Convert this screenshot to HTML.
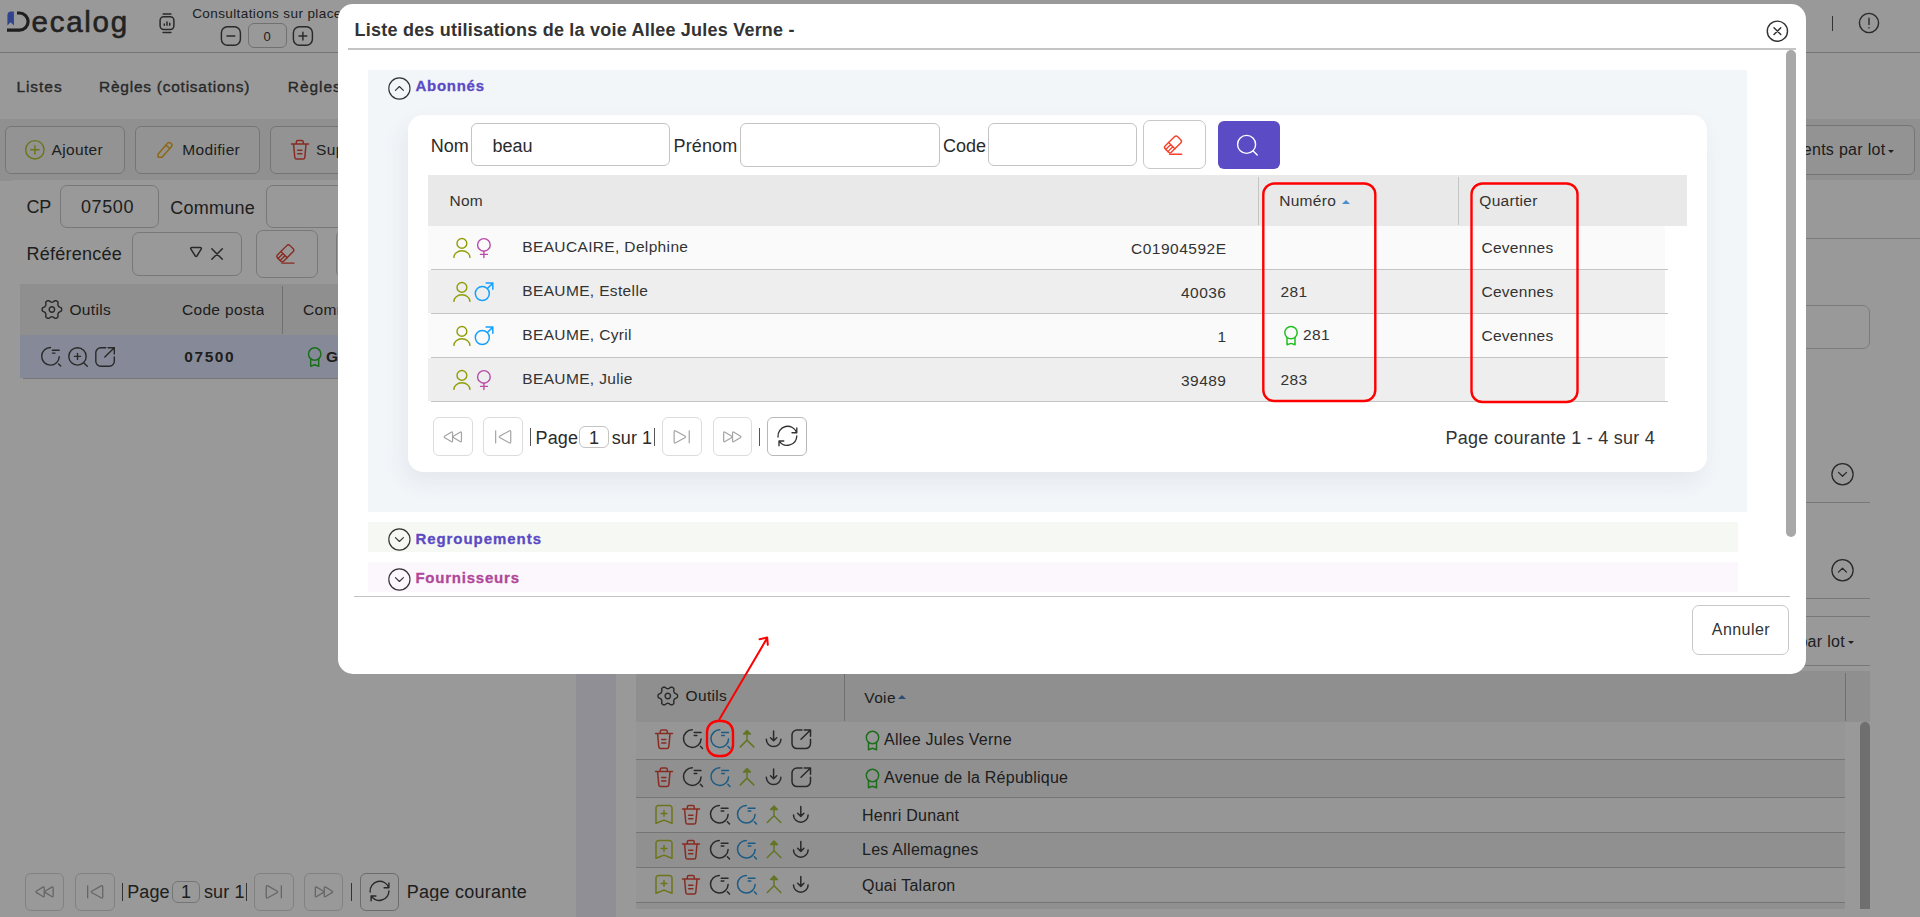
<!DOCTYPE html><html><head><meta charset="utf-8"><style>
html,body{margin:0;padding:0}
body{width:1920px;height:917px;overflow:hidden;position:relative;background:#fff;font-family:"Liberation Sans",sans-serif}
.t{position:absolute;line-height:1;white-space:nowrap}
.r{position:absolute}
.lay{position:absolute;left:0;top:0;overflow:visible}
#bg,#modal{position:absolute;left:0;top:0;width:1920px;height:917px;overflow:hidden}
#ov{position:absolute;left:0;top:0;width:1920px;height:917px;background:rgba(0,0,0,.4)}
</style></head><body>
<div id="bg"><div class="r" style="left:0px;top:0px;width:1920px;height:52px;background:#fff;"></div>
<div class="r" style="left:0px;top:52px;width:1920px;height:1px;background:#c4c4c4;"></div>
<div class="t" style="left:31.5px;top:6.63px;font-size:29.5px;color:#3a3a3a;letter-spacing:1.75px;-webkit-text-stroke:0.6px #3a3a3a;">ecalog</div>
<div class="t" style="left:192.2px;top:7.22px;font-size:13.5px;color:#333;letter-spacing:0.4px;">Consultations sur place</div>
<div class="r" style="left:247.5px;top:23.3px;width:39.0px;height:25.2px;background:#fff;border:1px solid #bdbdbd;border-radius:6px;box-sizing:border-box;"></div>
<div class="t" style="left:263.5px;top:29.70px;font-size:13px;color:#333;">0</div>
<div class="r" style="left:1832.3px;top:16px;width:1.0px;height:15px;background:#555;"></div>
<div class="t" style="left:16.4px;top:79.08px;font-size:15.5px;color:#444;letter-spacing:0.95px;-webkit-text-stroke:0.35px #444;">Listes</div>
<div class="t" style="left:99px;top:79.08px;font-size:15.5px;color:#444;letter-spacing:0.75px;-webkit-text-stroke:0.35px #444;">Règles (cotisations)</div>
<div class="t" style="left:287.8px;top:79.08px;font-size:15.5px;color:#444;letter-spacing:0.95px;-webkit-text-stroke:0.35px #444;">Règles</div>
<div class="r" style="left:0px;top:119px;width:1920px;height:62px;background:#f0f0f0;"></div>
<div class="r" style="left:5px;top:126px;width:120px;height:48px;background:#f6f6f6;border:1px solid #c4c4c4;border-radius:6px;box-sizing:border-box;"></div>
<div class="t" style="left:51.5px;top:141.88px;font-size:15.5px;color:#333;letter-spacing:0.35px;">Ajouter</div>
<div class="r" style="left:135px;top:126px;width:125px;height:48px;background:#f6f6f6;border:1px solid #c4c4c4;border-radius:6px;box-sizing:border-box;"></div>
<div class="t" style="left:182.2px;top:141.88px;font-size:15.5px;color:#333;letter-spacing:0.35px;">Modifier</div>
<div class="r" style="left:270px;top:126px;width:150px;height:48px;background:#f6f6f6;border:1px solid #c4c4c4;border-radius:6px;box-sizing:border-box;"></div>
<div class="t" style="left:316px;top:141.88px;font-size:15.5px;color:#333;letter-spacing:0.35px;">Supprimer</div>
<div class="r" style="left:1680px;top:125px;width:235px;height:50px;background:#f6f6f6;border:1px solid #c4c4c4;border-radius:6px;box-sizing:border-box;"></div>
<div class="t" style="right:34.5px;top:141.86px;font-size:16px;color:#333;letter-spacing:0.3px;">Traitements par lot</div>
<div class="r" style="left:1887.5px;top:149.5px;width:0;height:0;border-left:3.5px solid transparent;border-right:3.5px solid transparent;border-top:3.5px solid #333;"></div><div class="r" style="left:0px;top:180px;width:576px;height:737px;background:#fff;border-top-left-radius:16px;"></div>
<div class="t" style="left:26.5px;top:198.36px;font-size:18px;color:#333;letter-spacing:-0.3px;">CP</div>
<div class="r" style="left:60.3px;top:185px;width:99.10000000000001px;height:43.30000000000001px;background:#fff;border:1px solid #c8c8c8;border-radius:7px;box-sizing:border-box;"></div>
<div class="t" style="left:81px;top:197.96px;font-size:18px;color:#333;letter-spacing:0.6px;">07500</div>
<div class="t" style="left:170.2px;top:198.96px;font-size:18px;color:#333;letter-spacing:0.25px;">Commune</div>
<div class="r" style="left:266.4px;top:185px;width:293.6px;height:43.30000000000001px;background:#fff;border:1px solid #c8c8c8;border-radius:7px;box-sizing:border-box;"></div>
<div class="t" style="left:26.5px;top:245.26px;font-size:18px;color:#333;letter-spacing:0.25px;">Référencée</div>
<div class="r" style="left:132.3px;top:232.4px;width:109.39999999999998px;height:43.29999999999998px;background:#fff;border:1px solid #c8c8c8;border-radius:7px;box-sizing:border-box;"></div>
<div class="r" style="left:255.5px;top:229.6px;width:62.80000000000001px;height:48.900000000000006px;background:#fff;border:1px solid #c8c8c8;border-radius:7px;box-sizing:border-box;"></div>
<div class="r" style="left:336px;top:229.6px;width:64px;height:48.900000000000006px;background:#fff;border:1px solid #c8c8c8;border-radius:7px;box-sizing:border-box;"></div>
<div class="r" style="left:20px;top:284px;width:556px;height:51px;background:#eeeeee;"></div>
<div class="r" style="left:282px;top:286px;width:1px;height:48px;background:#bbb;"></div>
<div class="t" style="left:69.4px;top:302.08px;font-size:15.5px;color:#333;letter-spacing:0.35px;">Outils</div>
<div class="t" style="left:181.9px;top:302.08px;font-size:15.5px;color:#333;letter-spacing:0.35px;width:82px;overflow:hidden;">Code postal</div>
<div class="t" style="left:303px;top:302.08px;font-size:15.5px;color:#333;letter-spacing:0.35px;">Commune</div>
<div class="r" style="left:20px;top:335px;width:556px;height:43px;background:#dfe6fd;"></div>
<div class="r" style="left:23px;top:378px;width:553px;height:1px;background:#c8c8c8;"></div>
<div class="t" style="left:184.2px;top:348.58px;font-size:15.5px;color:#333;font-weight:bold;letter-spacing:1.6px;">07500</div>
<div class="t" style="left:326px;top:348.58px;font-size:15.5px;color:#333;font-weight:bold;">Grenoble</div>
<div class="r" style="left:25px;top:872.7px;width:39.3px;height:38.299999999999955px;background:#fff;border:1px solid #d8d8d8;border-radius:6px;box-sizing:border-box;"></div>
<div class="r" style="left:75.3px;top:872.7px;width:39.3px;height:38.299999999999955px;background:#fff;border:1px solid #d8d8d8;border-radius:6px;box-sizing:border-box;"></div>
<div class="r" style="left:254.4px;top:872.7px;width:39.29999999999998px;height:38.299999999999955px;background:#fff;border:1px solid #d8d8d8;border-radius:6px;box-sizing:border-box;"></div>
<div class="r" style="left:304.2px;top:872.7px;width:39.30000000000001px;height:38.299999999999955px;background:#fff;border:1px solid #d8d8d8;border-radius:6px;box-sizing:border-box;"></div>
<div class="r" style="left:359.6px;top:872.7px;width:39.0px;height:38.299999999999955px;background:#fff;border:1px solid #b4b4b4;border-radius:6px;box-sizing:border-box;"></div>
<div class="r" style="left:122px;top:883px;width:1px;height:18px;background:#555;"></div>
<div class="t" style="left:127.2px;top:883.26px;font-size:18px;color:#333;letter-spacing:0.1px;">Page</div>
<div class="r" style="left:171.5px;top:880.6px;width:28.900000000000006px;height:22.399999999999977px;background:#fff;border:1px solid #c4c4c4;border-radius:6px;box-sizing:border-box;"></div>
<div class="t" style="left:181px;top:883.26px;font-size:18px;color:#333;">1</div>
<div class="t" style="left:204px;top:883.26px;font-size:18px;color:#333;letter-spacing:0.1px;">sur 1</div>
<div class="r" style="left:246.3px;top:883px;width:1.0px;height:18px;background:#555;"></div>
<div class="r" style="left:351px;top:883px;width:1px;height:18px;background:#555;"></div>
<div class="t" style="left:406.7px;top:883.26px;font-size:18px;color:#333;letter-spacing:0.25px;width:120px;overflow:hidden;">Page courante 1 - 1 sur 1</div>
<div class="r" style="left:576px;top:180px;width:40px;height:737px;background:#efeff9;"></div>
<div class="r" style="left:616px;top:180px;width:1304px;height:737px;background:#fff;"></div>
<div class="r" style="left:616px;top:238px;width:1304px;height:1px;background:#cfcfcf;"></div>
<div class="r" style="left:1500px;top:305px;width:369.5999999999999px;height:43.60000000000002px;background:#fff;border:1px solid #cfcfcf;border-radius:7px;box-sizing:border-box;"></div>
<div class="r" style="left:616px;top:502px;width:1254px;height:1px;background:#c8c8c8;"></div>
<div class="r" style="left:616px;top:598px;width:1254px;height:1px;background:#c8c8c8;"></div>
<div class="r" style="left:616px;top:616px;width:1254px;height:1px;background:#c8c8c8;"></div>
<div class="t" style="right:75px;top:633.76px;font-size:16px;color:#333;letter-spacing:0.3px;">Traitements par lot</div>
<div class="r" style="left:1848px;top:641px;width:0;height:0;border-left:3.5px solid transparent;border-right:3.5px solid transparent;border-top:3.5px solid #333;"></div><div class="r" style="left:616px;top:665px;width:1254px;height:1px;background:#c8c8c8;"></div>
<div class="r" style="left:636px;top:671px;width:1234px;height:51px;background:#eeeeee;"></div>
<div class="r" style="left:843.5px;top:673px;width:1.0px;height:48px;background:#bbb;"></div>
<div class="r" style="left:1845px;top:673px;width:1px;height:48px;background:#bbb;"></div>
<div class="t" style="left:685.5px;top:688.38px;font-size:15.5px;color:#333;letter-spacing:0.35px;">Outils</div>
<div class="t" style="left:864.3px;top:689.58px;font-size:15.5px;color:#333;letter-spacing:0.35px;">Voie</div>
<div class="r" style="left:898px;top:695px;width:0;height:0;border-left:4px solid transparent;border-right:4px solid transparent;border-bottom:4px solid #4a7fc1;"></div><div class="r" style="left:636px;top:722px;width:1209px;height:37px;background:#fafafa;"></div>
<div class="r" style="left:636px;top:759px;width:1209px;height:1px;background:#c4c4c4;"></div>
<div class="r" style="left:636px;top:760px;width:1209px;height:37px;background:#f0f0f0;"></div>
<div class="r" style="left:636px;top:797px;width:1209px;height:1px;background:#c4c4c4;"></div>
<div class="r" style="left:636px;top:798px;width:1209px;height:34px;background:#fafafa;"></div>
<div class="r" style="left:636px;top:832px;width:1209px;height:1px;background:#c4c4c4;"></div>
<div class="r" style="left:636px;top:833px;width:1209px;height:34px;background:#f0f0f0;"></div>
<div class="r" style="left:636px;top:867px;width:1209px;height:1px;background:#c4c4c4;"></div>
<div class="r" style="left:636px;top:868px;width:1209px;height:34px;background:#fafafa;"></div>
<div class="r" style="left:636px;top:902px;width:1209px;height:1px;background:#c4c4c4;"></div>
<div class="r" style="left:636px;top:903px;width:1209px;height:6px;background:#f0f0f0;"></div>
<div class="r" style="left:1860px;top:722px;width:10px;height:187px;background:#b9b9b9;border-radius:5px 5px 0 0;"></div>
<div class="t" style="left:884px;top:731.66px;font-size:16px;color:#333;letter-spacing:0.25px;">Allee Jules Verne</div>
<div class="t" style="left:884px;top:769.76px;font-size:16px;color:#333;letter-spacing:0.25px;">Avenue de la République</div>
<div class="t" style="left:862px;top:807.76px;font-size:16px;color:#333;letter-spacing:0.25px;">Henri Dunant</div>
<div class="t" style="left:862px;top:842.36px;font-size:16px;color:#333;letter-spacing:0.25px;">Les Allemagnes</div>
<div class="t" style="left:862px;top:877.96px;font-size:16px;color:#333;letter-spacing:0.25px;">Quai Talaron</div>
<svg class="lay" width="1920" height="917" viewBox="0 0 1920 917" fill="none" stroke-linecap="round" stroke-linejoin="round"><path d="M7.4 25.6V15.5A4 4 0 0 1 11.2 11.4H13.9V25.6L10.6 22.3Z" fill="#4f70ee" stroke="none"/><path d="M17 13H19.5A8.3 8.3 0 0 1 19.5 30.2H7" stroke="#333" stroke-width="3.2" stroke-linecap="butt"/><g transform="translate(160.1 13.5)" stroke="#454545" color="#454545" stroke-width="1.5"><rect x="0" y="3.3" width="13.8" height="12.6" rx="3.6"/><path d="M3 .5h7.8M3 18.9h7.8M4.2 10.6v1.2M6.9 8.6v3.2M9.6 9.8v2"/></g>
<g transform="translate(221.4 26.8)" stroke="#454545" color="#454545" stroke-width="1.45"><rect x="0" y="0" width="19" height="18.4" rx="6"/><path d="M5.6 9.2h7.8"/></g>
<g transform="translate(293.4 26.8)" stroke="#454545" color="#454545" stroke-width="1.45"><rect x="0" y="0" width="19" height="18.4" rx="6"/><path d="M5.6 9.2h7.8M9.5 5.3v7.8"/></g>
<g transform="translate(1869 23)" stroke="#454545" color="#454545" stroke-width="1.4"><circle cx="0" cy="0" r="9.6"/><path d="M0-4.8V1.5M0 4.6v.3"/></g>
<g transform="translate(34.9 149.8)" stroke="#b4c42a" color="#b4c42a" stroke-width="1.4"><circle cx="0" cy="0" r="9.2"/><path d="M-4.2 0h8.4M0-4.2v8.4"/></g>
<g transform="translate(157 140.8)" stroke="#e8ae22" color="#e8ae22" stroke-width="1.5"><path d="M1 13.5L10.5 2.5a2.6 2.6 0 0 1 3.9 3.4L5 16.5 1.2 16.5zM9 4.5l4 3.2"/></g>
<g transform="translate(291 139.9)" stroke="#e04a3a" color="#e04a3a" stroke-width="1.5"><path d="M.5 4.2H17.5M5.3 4V2.3A1.6 1.6 0 0 1 6.9.7h3.8a1.6 1.6 0 0 1 1.6 1.6V4M2.6 4.6l1.2 13a1.8 1.8 0 0 0 1.8 1.6h6.4a1.8 1.8 0 0 0 1.8-1.6l1.2-13M6.7 10.3h4.2M6.7 13.8h4.2"/></g>
<g transform="translate(190.2 246.3)" stroke="#454545" color="#454545" stroke-width="1.5"><path d="M1.5 1.2H10.2a1 1 0 0 1 .8 1.6L6.7 9.7a1 1 0 0 1-1.6 0L.7 2.8A1 1 0 0 1 1.5 1.2z"/></g>
<g transform="translate(211.3 248.3)" stroke="#454545" color="#454545" stroke-width="1.5"><path d="M.5.5L11 11M11 .5L.5 11"/></g>
<g transform="translate(275.3 244.1)" stroke="#e04a3a" color="#e04a3a" stroke-width="1.4"><g transform="rotate(-45 10 9.2)"><rect x="1.25" y="4.8" width="17.5" height="8.8" rx="2.3"/><path d="M8.25 4.8V13.6M1.25 7.73H8.25M1.25 10.67H8.25"/></g><path d="M6.5 19H18.7"/></g>
<g transform="translate(51.9 309.5)" stroke="#454545" color="#454545" stroke-width="1.4"><path d="M9.8 0.0 L9.7 0.9 L9.3 1.6 L8.3 2.2 L7.3 2.6 L6.7 3.1 L6.4 3.7 L6.1 4.3 L5.9 5.0 L6.1 6.1 L6.1 7.3 L5.6 8.0 L4.9 8.5 L4.1 8.8 L3.2 8.9 L2.2 8.3 L1.3 7.6 L0.6 7.4 L0.0 7.3 L-0.6 7.4 L-1.3 7.6 L-2.2 8.3 L-3.2 8.9 L-4.1 8.8 L-4.9 8.5 L-5.6 8.0 L-6.1 7.3 L-6.1 6.1 L-5.9 5.0 L-6.1 4.3 L-6.4 3.7 L-6.7 3.1 L-7.3 2.6 L-8.3 2.2 L-9.3 1.6 L-9.7 0.9 L-9.8 0.0 L-9.7 -0.9 L-9.3 -1.6 L-8.3 -2.2 L-7.3 -2.6 L-6.7 -3.1 L-6.4 -3.7 L-6.1 -4.3 L-5.9 -5.0 L-6.1 -6.1 L-6.1 -7.3 L-5.6 -8.0 L-4.9 -8.5 L-4.1 -8.8 L-3.2 -8.9 L-2.2 -8.3 L-1.3 -7.6 L-0.6 -7.4 L-0.0 -7.3 L0.6 -7.4 L1.3 -7.6 L2.2 -8.3 L3.2 -8.9 L4.1 -8.8 L4.9 -8.5 L5.6 -8.0 L6.1 -7.3 L6.1 -6.1 L5.9 -5.0 L6.1 -4.3 L6.4 -3.7 L6.7 -3.1 L7.3 -2.6 L8.3 -2.2 L9.3 -1.6 L9.7 -0.9Z"/><circle cx="0" cy="0" r="2.7"/></g>
<g transform="translate(41.2 347)" stroke="#454545" color="#454545" stroke-width="1.4"><path d="M9.3 .5A8.8 8.8 0 1 0 18.1 9.6"/><path d="M11.2 3.3h6.8M11.2 6.1h2.6M17.4 16.9l2.1 2.2"/></g>
<g transform="translate(68.3 347)" stroke="#454545" color="#454545" stroke-width="1.4"><circle cx="9.2" cy="9.4" r="8.7"/><path d="M6.2 9.4h6M9.2 6.4v6M15.6 15.9l3.4 3.4"/></g>
<g transform="translate(95.3 347)" stroke="#454545" color="#454545" stroke-width="1.4"><path d="M19 10V14.3a5 5 0 0 1-5 5H5.5a5 5 0 0 1-5-5V5.8a5 5 0 0 1 5-5H10.5M9.5 10L19 .7M12.8.7H19V6.9"/></g>
<g transform="translate(314.7 354)" stroke="#2eb82e" color="#2eb82e" stroke-width="1.5"><circle cx="0" cy="0" r="6.2"/><path d="M-4 5V12.2L0 10.8L4 12.2V5"/></g>
<g transform="translate(34.65 884.85)" stroke="#aaa" color="#aaa" stroke-width="1.3"><path d="M1.87 6.17L8.23 2.33Q9.60 1.50 9.60 3.10L9.60 10.90Q9.60 12.50 8.23 11.67L1.87 7.83Q0.50 7.00 1.87 6.17Z"/><path d="M10.77 6.17L17.13 2.33Q18.50 1.50 18.50 3.10L18.50 10.90Q18.50 12.50 17.13 11.67L10.77 7.83Q9.40 7.00 10.77 6.17Z"/></g>
<g transform="translate(86.94999999999999 884.85)" stroke="#aaa" color="#aaa" stroke-width="1.3"><path d="M.7 1V13"/><path d="M5.08 6.13L14.22 1.07Q15.80 0.20 15.80 2.00L15.80 12.00Q15.80 13.80 14.22 12.93L5.08 7.87Q3.50 7.00 5.08 6.13Z"/></g>
<g transform="translate(266.05 884.85)" stroke="#aaa" color="#aaa" stroke-width="1.3"><path d="M15.3 1V13"/><path d="M10.92 6.13L1.78 1.07Q0.20 0.20 0.20 2.00L0.20 12.00Q0.20 13.80 1.78 12.93L10.92 7.87Q12.50 7.00 10.92 6.13Z"/></g>
<g transform="translate(313.85 884.85)" stroke="#aaa" color="#aaa" stroke-width="1.3"><path d="M18.13 6.17L11.77 2.33Q10.40 1.50 10.40 3.10L10.40 10.90Q10.40 12.50 11.77 11.67L18.13 7.83Q19.50 7.00 18.13 6.17Z"/><path d="M9.23 6.17L2.87 2.33Q1.50 1.50 1.50 3.10L1.50 10.90Q1.50 12.50 2.87 11.67L9.23 7.83Q10.60 7.00 9.23 6.17Z"/></g>
<g transform="translate(369.0 881.65)" stroke="#454545" color="#454545" stroke-width="1.4"><path d="M1.1 10.3A9.7 9.7 0 0 1 19.9 6.1M19.9 1.3V6.1H15.1M19.9 9.3A9.7 9.7 0 0 1 2.1 14.3M2.1 19.1V14.3H6.9"/></g>
<g transform="translate(1842.5 474.2)" stroke="#454545" color="#454545" stroke-width="1.3"><circle cx="0" cy="0" r="10.6"/><path d="M-4-1.8L0 2l4-3.8"/></g>
<g transform="translate(1842.5 570.3)" stroke="#454545" color="#454545" stroke-width="1.3"><circle cx="0" cy="0" r="10.6"/><path d="M-4 1.8L0-2l4 3.8"/></g>
<g transform="translate(667.8 696)" stroke="#454545" color="#454545" stroke-width="1.4"><path d="M9.8 0.0 L9.7 0.9 L9.3 1.6 L8.3 2.2 L7.3 2.6 L6.7 3.1 L6.4 3.7 L6.1 4.3 L5.9 5.0 L6.1 6.1 L6.1 7.3 L5.6 8.0 L4.9 8.5 L4.1 8.8 L3.2 8.9 L2.2 8.3 L1.3 7.6 L0.6 7.4 L0.0 7.3 L-0.6 7.4 L-1.3 7.6 L-2.2 8.3 L-3.2 8.9 L-4.1 8.8 L-4.9 8.5 L-5.6 8.0 L-6.1 7.3 L-6.1 6.1 L-5.9 5.0 L-6.1 4.3 L-6.4 3.7 L-6.7 3.1 L-7.3 2.6 L-8.3 2.2 L-9.3 1.6 L-9.7 0.9 L-9.8 0.0 L-9.7 -0.9 L-9.3 -1.6 L-8.3 -2.2 L-7.3 -2.6 L-6.7 -3.1 L-6.4 -3.7 L-6.1 -4.3 L-5.9 -5.0 L-6.1 -6.1 L-6.1 -7.3 L-5.6 -8.0 L-4.9 -8.5 L-4.1 -8.8 L-3.2 -8.9 L-2.2 -8.3 L-1.3 -7.6 L-0.6 -7.4 L-0.0 -7.3 L0.6 -7.4 L1.3 -7.6 L2.2 -8.3 L3.2 -8.9 L4.1 -8.8 L4.9 -8.5 L5.6 -8.0 L6.1 -7.3 L6.1 -6.1 L5.9 -5.0 L6.1 -4.3 L6.4 -3.7 L6.7 -3.1 L7.3 -2.6 L8.3 -2.2 L9.3 -1.6 L9.7 -0.9Z"/><circle cx="0" cy="0" r="2.7"/></g>
<g transform="translate(655 729.3)" stroke="#e04a3a" color="#e04a3a" stroke-width="1.5"><path d="M.5 4.2H17.5M5.3 4V2.3A1.6 1.6 0 0 1 6.9.7h3.8a1.6 1.6 0 0 1 1.6 1.6V4M2.6 4.6l1.2 13a1.8 1.8 0 0 0 1.8 1.6h6.4a1.8 1.8 0 0 0 1.8-1.6l1.2-13M6.7 10.3h4.2M6.7 13.8h4.2"/></g>
<g transform="translate(683 729.3)" stroke="#454545" color="#454545" stroke-width="1.5"><path d="M9.3 .5A8.8 8.8 0 1 0 18.1 9.6"/><path d="M11.2 3.3h6.8M11.2 6.1h2.6M17.4 16.9l2.1 2.2"/></g>
<g transform="translate(710.5 729.3)" stroke="#2f98dc" color="#2f98dc" stroke-width="1.5"><path d="M9.3 .5A8.8 8.8 0 1 0 18.1 9.6"/><path d="M11.2 3.3h6.8M11.2 6.1h2.6M17.4 16.9l2.1 2.2"/></g>
<g transform="translate(740 730.3)" stroke="#a6c23e" color="#a6c23e" stroke-width="1.5"><path d="M7 2.5V9.8M.3 16.6L7 9.8l6.8 6.8"/><path d="M3.6 3.7L7 .2l3.4 3.5z" fill="currentColor"/></g>
<g transform="translate(765.8 731.0)" stroke="#454545" color="#454545" stroke-width="1.5"><path d="M7.8 0V9.8M4.7 6.7L7.8 9.8L10.9 6.7M.5 8.3A7.3 7.3 0 0 0 15.1 8.3"/></g>
<g transform="translate(791.5 729.3)" stroke="#454545" color="#454545" stroke-width="1.5"><path d="M19 10V14.3a5 5 0 0 1-5 5H5.5a5 5 0 0 1-5-5V5.8a5 5 0 0 1 5-5H10.5M9.5 10L19 .7M12.8.7H19V6.9"/></g>
<g transform="translate(655 767.3)" stroke="#e04a3a" color="#e04a3a" stroke-width="1.5"><path d="M.5 4.2H17.5M5.3 4V2.3A1.6 1.6 0 0 1 6.9.7h3.8a1.6 1.6 0 0 1 1.6 1.6V4M2.6 4.6l1.2 13a1.8 1.8 0 0 0 1.8 1.6h6.4a1.8 1.8 0 0 0 1.8-1.6l1.2-13M6.7 10.3h4.2M6.7 13.8h4.2"/></g>
<g transform="translate(683 767.3)" stroke="#454545" color="#454545" stroke-width="1.5"><path d="M9.3 .5A8.8 8.8 0 1 0 18.1 9.6"/><path d="M11.2 3.3h6.8M11.2 6.1h2.6M17.4 16.9l2.1 2.2"/></g>
<g transform="translate(710.5 767.3)" stroke="#2f98dc" color="#2f98dc" stroke-width="1.5"><path d="M9.3 .5A8.8 8.8 0 1 0 18.1 9.6"/><path d="M11.2 3.3h6.8M11.2 6.1h2.6M17.4 16.9l2.1 2.2"/></g>
<g transform="translate(740 768.3)" stroke="#a6c23e" color="#a6c23e" stroke-width="1.5"><path d="M7 2.5V9.8M.3 16.6L7 9.8l6.8 6.8"/><path d="M3.6 3.7L7 .2l3.4 3.5z" fill="currentColor"/></g>
<g transform="translate(765.8 769.0)" stroke="#454545" color="#454545" stroke-width="1.5"><path d="M7.8 0V9.8M4.7 6.7L7.8 9.8L10.9 6.7M.5 8.3A7.3 7.3 0 0 0 15.1 8.3"/></g>
<g transform="translate(791.5 767.3)" stroke="#454545" color="#454545" stroke-width="1.5"><path d="M19 10V14.3a5 5 0 0 1-5 5H5.5a5 5 0 0 1-5-5V5.8a5 5 0 0 1 5-5H10.5M9.5 10L19 .7M12.8.7H19V6.9"/></g>
<g transform="translate(655.5 804.9)" stroke="#b4c42a" color="#b4c42a" stroke-width="1.5"><path d="M3 .7h11a2.5 2.5 0 0 1 2.5 2.5V18.3L8.5 15.2.5 18.3V3.2A2.5 2.5 0 0 1 3 .7zM8.5 5.6v5.8M5.6 8.5h5.8"/></g>
<g transform="translate(682 804.9)" stroke="#e04a3a" color="#e04a3a" stroke-width="1.5"><path d="M.5 4.2H17.5M5.3 4V2.3A1.6 1.6 0 0 1 6.9.7h3.8a1.6 1.6 0 0 1 1.6 1.6V4M2.6 4.6l1.2 13a1.8 1.8 0 0 0 1.8 1.6h6.4a1.8 1.8 0 0 0 1.8-1.6l1.2-13M6.7 10.3h4.2M6.7 13.8h4.2"/></g>
<g transform="translate(710 804.9)" stroke="#454545" color="#454545" stroke-width="1.5"><path d="M9.3 .5A8.8 8.8 0 1 0 18.1 9.6"/><path d="M11.2 3.3h6.8M11.2 6.1h2.6M17.4 16.9l2.1 2.2"/></g>
<g transform="translate(737 804.9)" stroke="#2f98dc" color="#2f98dc" stroke-width="1.5"><path d="M9.3 .5A8.8 8.8 0 1 0 18.1 9.6"/><path d="M11.2 3.3h6.8M11.2 6.1h2.6M17.4 16.9l2.1 2.2"/></g>
<g transform="translate(767 805.9)" stroke="#a6c23e" color="#a6c23e" stroke-width="1.5"><path d="M7 2.5V9.8M.3 16.6L7 9.8l6.8 6.8"/><path d="M3.6 3.7L7 .2l3.4 3.5z" fill="currentColor"/></g>
<g transform="translate(793 806.6)" stroke="#454545" color="#454545" stroke-width="1.5"><path d="M7.8 0V9.8M4.7 6.7L7.8 9.8L10.9 6.7M.5 8.3A7.3 7.3 0 0 0 15.1 8.3"/></g>
<g transform="translate(655.5 839.9)" stroke="#b4c42a" color="#b4c42a" stroke-width="1.5"><path d="M3 .7h11a2.5 2.5 0 0 1 2.5 2.5V18.3L8.5 15.2.5 18.3V3.2A2.5 2.5 0 0 1 3 .7zM8.5 5.6v5.8M5.6 8.5h5.8"/></g>
<g transform="translate(682 839.9)" stroke="#e04a3a" color="#e04a3a" stroke-width="1.5"><path d="M.5 4.2H17.5M5.3 4V2.3A1.6 1.6 0 0 1 6.9.7h3.8a1.6 1.6 0 0 1 1.6 1.6V4M2.6 4.6l1.2 13a1.8 1.8 0 0 0 1.8 1.6h6.4a1.8 1.8 0 0 0 1.8-1.6l1.2-13M6.7 10.3h4.2M6.7 13.8h4.2"/></g>
<g transform="translate(710 839.9)" stroke="#454545" color="#454545" stroke-width="1.5"><path d="M9.3 .5A8.8 8.8 0 1 0 18.1 9.6"/><path d="M11.2 3.3h6.8M11.2 6.1h2.6M17.4 16.9l2.1 2.2"/></g>
<g transform="translate(737 839.9)" stroke="#2f98dc" color="#2f98dc" stroke-width="1.5"><path d="M9.3 .5A8.8 8.8 0 1 0 18.1 9.6"/><path d="M11.2 3.3h6.8M11.2 6.1h2.6M17.4 16.9l2.1 2.2"/></g>
<g transform="translate(767 840.9)" stroke="#a6c23e" color="#a6c23e" stroke-width="1.5"><path d="M7 2.5V9.8M.3 16.6L7 9.8l6.8 6.8"/><path d="M3.6 3.7L7 .2l3.4 3.5z" fill="currentColor"/></g>
<g transform="translate(793 841.6)" stroke="#454545" color="#454545" stroke-width="1.5"><path d="M7.8 0V9.8M4.7 6.7L7.8 9.8L10.9 6.7M.5 8.3A7.3 7.3 0 0 0 15.1 8.3"/></g>
<g transform="translate(655.5 874.9)" stroke="#b4c42a" color="#b4c42a" stroke-width="1.5"><path d="M3 .7h11a2.5 2.5 0 0 1 2.5 2.5V18.3L8.5 15.2.5 18.3V3.2A2.5 2.5 0 0 1 3 .7zM8.5 5.6v5.8M5.6 8.5h5.8"/></g>
<g transform="translate(682 874.9)" stroke="#e04a3a" color="#e04a3a" stroke-width="1.5"><path d="M.5 4.2H17.5M5.3 4V2.3A1.6 1.6 0 0 1 6.9.7h3.8a1.6 1.6 0 0 1 1.6 1.6V4M2.6 4.6l1.2 13a1.8 1.8 0 0 0 1.8 1.6h6.4a1.8 1.8 0 0 0 1.8-1.6l1.2-13M6.7 10.3h4.2M6.7 13.8h4.2"/></g>
<g transform="translate(710 874.9)" stroke="#454545" color="#454545" stroke-width="1.5"><path d="M9.3 .5A8.8 8.8 0 1 0 18.1 9.6"/><path d="M11.2 3.3h6.8M11.2 6.1h2.6M17.4 16.9l2.1 2.2"/></g>
<g transform="translate(737 874.9)" stroke="#2f98dc" color="#2f98dc" stroke-width="1.5"><path d="M9.3 .5A8.8 8.8 0 1 0 18.1 9.6"/><path d="M11.2 3.3h6.8M11.2 6.1h2.6M17.4 16.9l2.1 2.2"/></g>
<g transform="translate(767 875.9)" stroke="#a6c23e" color="#a6c23e" stroke-width="1.5"><path d="M7 2.5V9.8M.3 16.6L7 9.8l6.8 6.8"/><path d="M3.6 3.7L7 .2l3.4 3.5z" fill="currentColor"/></g>
<g transform="translate(793 876.6)" stroke="#454545" color="#454545" stroke-width="1.5"><path d="M7.8 0V9.8M4.7 6.7L7.8 9.8L10.9 6.7M.5 8.3A7.3 7.3 0 0 0 15.1 8.3"/></g>
<g transform="translate(872.5 737.5)" stroke="#2eb82e" color="#2eb82e" stroke-width="1.5"><circle cx="0" cy="0" r="6.2"/><path d="M-4 5V12.2L0 10.8L4 12.2V5"/></g>
<g transform="translate(872.5 775.5)" stroke="#2eb82e" color="#2eb82e" stroke-width="1.5"><circle cx="0" cy="0" r="6.2"/><path d="M-4 5V12.2L0 10.8L4 12.2V5"/></g>
</svg>
</div><div id="ov"></div><div id="modal"><div class="r" style="left:338px;top:4px;width:1468px;height:670px;background:#fff;border-radius:15px;"></div>
<div class="t" style="left:354.6px;top:21.16px;font-size:18px;color:#333;font-weight:bold;letter-spacing:0.22px;">Liste des utilisations de la voie Allee Jules Verne -</div>
<div class="r" style="left:348px;top:48px;width:1448px;height:2px;background:#c4c4c4;"></div>
<div class="r" style="left:1786px;top:50px;width:10px;height:487px;background:#a8a8a8;border-radius:5px;"></div>
<div class="r" style="left:368px;top:70px;width:1379px;height:442px;background:#f2f6f9;"></div>
<div class="t" style="left:415.4px;top:78.30px;font-size:15px;color:#5b4ac4;font-weight:bold;letter-spacing:0.75px;-webkit-text-stroke:0.3px #5b4ac4;">Abonnés</div>
<div class="r" style="left:408px;top:115px;width:1299px;height:357px;background:#fff;border-radius:15px;box-shadow:-4px 10px 22px rgba(40,60,90,.07);"></div>
<div class="t" style="left:430.7px;top:136.96px;font-size:18px;color:#2b2b2b;">Nom</div>
<div class="r" style="left:471.3px;top:123.2px;width:198.99999999999994px;height:43.3px;background:#fff;border:1px solid #c4c4c4;border-radius:6px;box-sizing:border-box;"></div>
<div class="t" style="left:492.5px;top:136.96px;font-size:18px;color:#2b2b2b;">beau</div>
<div class="t" style="left:673.6px;top:136.96px;font-size:18px;color:#2b2b2b;letter-spacing:0.1px;">Prénom</div>
<div class="r" style="left:740.2px;top:123.3px;width:199.5999999999999px;height:43.39999999999999px;background:#fff;border:1px solid #c4c4c4;border-radius:6px;box-sizing:border-box;"></div>
<div class="t" style="left:943px;top:136.96px;font-size:18px;color:#2b2b2b;">Code</div>
<div class="r" style="left:988.1px;top:123.3px;width:149.30000000000007px;height:43.2px;background:#fff;border:1px solid #c4c4c4;border-radius:6px;box-sizing:border-box;"></div>
<div class="r" style="left:1143.4px;top:120.2px;width:63.09999999999991px;height:49.3px;background:#fff;border:1px solid #c8c8c8;border-radius:7px;box-sizing:border-box;"></div>
<div class="r" style="left:1217.8px;top:120.6px;width:62.299999999999955px;height:48.599999999999994px;background:#5b4bc4;border-radius:6px;"></div>
<div class="r" style="left:428px;top:175px;width:1259px;height:51px;background:#e9e9e9;"></div>
<div class="r" style="left:1258px;top:177px;width:1px;height:48px;background:#c4c4c4;"></div>
<div class="r" style="left:1458px;top:177px;width:1px;height:48px;background:#c4c4c4;"></div>
<div class="t" style="left:449.4px;top:193.13px;font-size:15.5px;color:#333;letter-spacing:0.3px;">Nom</div>
<div class="t" style="left:1279.2px;top:193.08px;font-size:15.5px;color:#333;letter-spacing:0.3px;">Numéro</div>
<div class="r" style="left:1341.5px;top:199.5px;width:0;height:0;border-left:4px solid transparent;border-right:4px solid transparent;border-bottom:4px solid #4a8fd1;"></div><div class="t" style="left:1479.3px;top:192.78px;font-size:15.5px;color:#333;letter-spacing:0.3px;">Quartier</div>
<div class="r" style="left:428px;top:226px;width:1237px;height:43px;background:#fafafa;"></div>
<div class="r" style="left:431px;top:269px;width:1237px;height:1px;background:#c4c4c4;"></div>
<div class="t" style="left:522.3px;top:238.88px;font-size:15.5px;color:#333;letter-spacing:0.35px;">BEAUCAIRE, Delphine</div>
<div class="t" style="right:693.5px;top:241.18px;font-size:15.5px;color:#333;letter-spacing:0.5px;">C01904592E</div>
<div class="t" style="left:1481.4px;top:240.08px;font-size:15.5px;color:#333;letter-spacing:0.3px;">Cevennes</div>
<div class="r" style="left:428px;top:270px;width:1237px;height:43px;background:#eeeeee;"></div>
<div class="r" style="left:431px;top:313px;width:1237px;height:1px;background:#c4c4c4;"></div>
<div class="t" style="left:522.3px;top:282.88px;font-size:15.5px;color:#333;letter-spacing:0.35px;">BEAUME, Estelle</div>
<div class="t" style="right:693.5px;top:285.18px;font-size:15.5px;color:#333;letter-spacing:0.5px;">40036</div>
<div class="t" style="left:1280.5px;top:284.38px;font-size:15.5px;color:#333;letter-spacing:0.4px;">281</div>
<div class="t" style="left:1481.4px;top:284.08px;font-size:15.5px;color:#333;letter-spacing:0.3px;">Cevennes</div>
<div class="r" style="left:428px;top:314px;width:1237px;height:43px;background:#fafafa;"></div>
<div class="r" style="left:431px;top:357px;width:1237px;height:1px;background:#c4c4c4;"></div>
<div class="t" style="left:522.3px;top:326.88px;font-size:15.5px;color:#333;letter-spacing:0.35px;">BEAUME, Cyril</div>
<div class="t" style="right:693.5px;top:329.18px;font-size:15.5px;color:#333;letter-spacing:0.5px;">1</div>
<div class="t" style="left:1302.9px;top:326.78px;font-size:15.5px;color:#333;letter-spacing:0.4px;">281</div>
<div class="t" style="left:1481.4px;top:328.08px;font-size:15.5px;color:#333;letter-spacing:0.3px;">Cevennes</div>
<div class="r" style="left:428px;top:358px;width:1237px;height:43px;background:#eeeeee;"></div>
<div class="r" style="left:431px;top:401px;width:1237px;height:1px;background:#c4c4c4;"></div>
<div class="t" style="left:522.3px;top:370.88px;font-size:15.5px;color:#333;letter-spacing:0.35px;">BEAUME, Julie</div>
<div class="t" style="right:693.5px;top:373.18px;font-size:15.5px;color:#333;letter-spacing:0.5px;">39489</div>
<div class="t" style="left:1280.5px;top:372.38px;font-size:15.5px;color:#333;letter-spacing:0.4px;">283</div>
<div class="r" style="left:433.3px;top:417.3px;width:39.30000000000001px;height:39.099999999999966px;background:#fff;border:1px solid #dcdcdc;border-radius:6px;box-sizing:border-box;"></div>
<div class="r" style="left:483.3px;top:417.3px;width:39.30000000000001px;height:39.099999999999966px;background:#fff;border:1px solid #dcdcdc;border-radius:6px;box-sizing:border-box;"></div>
<div class="r" style="left:662.3px;top:417.3px;width:39.299999999999955px;height:39.099999999999966px;background:#fff;border:1px solid #dcdcdc;border-radius:6px;box-sizing:border-box;"></div>
<div class="r" style="left:712.5px;top:417.3px;width:39.299999999999955px;height:39.099999999999966px;background:#fff;border:1px solid #dcdcdc;border-radius:6px;box-sizing:border-box;"></div>
<div class="r" style="left:767.2px;top:417.3px;width:39.59999999999991px;height:39.099999999999966px;background:#fff;border:1px solid #b8b8b8;border-radius:6px;box-sizing:border-box;"></div>
<div class="r" style="left:530px;top:428px;width:1px;height:18px;background:#555;"></div>
<div class="t" style="left:535.6px;top:428.76px;font-size:18px;color:#2b2b2b;letter-spacing:0.1px;">Page</div>
<div class="r" style="left:579.4px;top:425.6px;width:29.200000000000045px;height:22.69999999999999px;background:#fff;border:1px solid #c4c4c4;border-radius:6px;box-sizing:border-box;"></div>
<div class="t" style="left:589px;top:428.76px;font-size:18px;color:#2b2b2b;">1</div>
<div class="t" style="left:611.7px;top:428.76px;font-size:18px;color:#2b2b2b;letter-spacing:0.1px;">sur 1</div>
<div class="r" style="left:654.3px;top:428px;width:1.0px;height:18px;background:#555;"></div>
<div class="r" style="left:759.3px;top:428px;width:1.0px;height:18px;background:#555;"></div>
<div class="t" style="left:1445.6px;top:429.16px;font-size:18px;color:#333;letter-spacing:0.25px;">Page courante 1 - 4 sur 4</div>
<div class="r" style="left:368px;top:522px;width:1370px;height:30px;background:#f6f9f3;"></div>
<div class="t" style="left:415.4px;top:530.60px;font-size:15px;color:#5b4ac4;font-weight:bold;letter-spacing:0.95px;-webkit-text-stroke:0.3px #5b4ac4;">Regroupements</div>
<div class="r" style="left:368px;top:562px;width:1370px;height:30px;background:#fcf7fc;"></div>
<div class="t" style="left:415.4px;top:570.30px;font-size:15px;color:#b0479a;font-weight:bold;letter-spacing:0.78px;-webkit-text-stroke:0.3px #b0479a;">Fournisseurs</div>
<div class="r" style="left:354px;top:596px;width:1436px;height:1px;background:#c4c4c4;"></div>
<div class="r" style="left:1692.1px;top:605.2px;width:96.80000000000018px;height:49.5px;background:#fff;border:1px solid #c8c8c8;border-radius:7px;box-sizing:border-box;"></div>
<div class="t" style="left:1711.8px;top:621.66px;font-size:16px;color:#333;letter-spacing:0.45px;">Annuler</div>
<svg class="lay" width="1920" height="917" viewBox="0 0 1920 917" fill="none" stroke-linecap="round" stroke-linejoin="round"><g transform="translate(1777.4 31.2)" stroke="#333" color="#333" stroke-width="1.45"><circle cx="0" cy="0" r="10.1"/><path d="M-3.4-3.4L3.4 3.4M3.4-3.4L-3.4 3.4"/></g>
<g transform="translate(399.4 88.5)" stroke="#333" color="#333" stroke-width="1.15"><circle cx="0" cy="0" r="10.6"/><path d="M-4 1.8L0-2l4 3.8"/></g>
<g transform="translate(1163 135.2)" stroke="#f5412a" color="#f5412a" stroke-width="1.4"><g transform="rotate(-45 10 9.2)"><rect x="1.25" y="4.8" width="17.5" height="8.8" rx="2.3"/><path d="M8.25 4.8V13.6M1.25 7.73H8.25M1.25 10.67H8.25"/></g><path d="M6.5 19H18.7"/></g>
<g transform="translate(1237.4 135.2)" stroke="#fff" color="#fff" stroke-width="1.4"><circle cx="9.2" cy="9.2" r="9"/><path d="M15.8 15.8L19.8 19.8"/></g>
<g transform="translate(453.9 238.5)" stroke="#909e08" color="#909e08" stroke-width="1.4"><circle cx="8" cy="4.9" r="4.9"/><path d="M0 18.9A8 6.6 0 0 1 16 18.9"/></g>
<g transform="translate(477.4 238.4)" stroke="#b84ca8" color="#b84ca8" stroke-width="1.4"><circle cx="6.5" cy="6.5" r="6.3"/><path d="M6.5 12.9V19.1M3.1 16H10"/></g>
<g transform="translate(453.9 282.5)" stroke="#909e08" color="#909e08" stroke-width="1.4"><circle cx="8" cy="4.9" r="4.9"/><path d="M0 18.9A8 6.6 0 0 1 16 18.9"/></g>
<g transform="translate(475.1 282.9)" stroke="#14a0ff" color="#14a0ff" stroke-width="1.5"><circle cx="7.2" cy="10.6" r="7"/><path d="M12.3 5.6L17.7 0.2M11 0.2H17.7V6.3"/></g>
<g transform="translate(453.9 326.5)" stroke="#909e08" color="#909e08" stroke-width="1.4"><circle cx="8" cy="4.9" r="4.9"/><path d="M0 18.9A8 6.6 0 0 1 16 18.9"/></g>
<g transform="translate(475.1 326.9)" stroke="#14a0ff" color="#14a0ff" stroke-width="1.5"><circle cx="7.2" cy="10.6" r="7"/><path d="M12.3 5.6L17.7 0.2M11 0.2H17.7V6.3"/></g>
<g transform="translate(1291 332.6)" stroke="#22c022" color="#22c022" stroke-width="1.5"><circle cx="0" cy="0" r="6.2"/><path d="M-4 5V12.2L0 10.8L4 12.2V5"/></g>
<g transform="translate(453.9 370.5)" stroke="#909e08" color="#909e08" stroke-width="1.4"><circle cx="8" cy="4.9" r="4.9"/><path d="M0 18.9A8 6.6 0 0 1 16 18.9"/></g>
<g transform="translate(477.4 370.4)" stroke="#b84ca8" color="#b84ca8" stroke-width="1.4"><circle cx="6.5" cy="6.5" r="6.3"/><path d="M6.5 12.9V19.1M3.1 16H10"/></g>
<g transform="translate(442.95000000000005 429.85)" stroke="#a4a4a4" color="#a4a4a4" stroke-width="1.2"><path d="M1.87 6.17L8.23 2.33Q9.60 1.50 9.60 3.10L9.60 10.90Q9.60 12.50 8.23 11.67L1.87 7.83Q0.50 7.00 1.87 6.17Z"/><path d="M10.77 6.17L17.13 2.33Q18.50 1.50 18.50 3.10L18.50 10.90Q18.50 12.50 17.13 11.67L10.77 7.83Q9.40 7.00 10.77 6.17Z"/></g>
<g transform="translate(494.95000000000005 429.85)" stroke="#a4a4a4" color="#a4a4a4" stroke-width="1.2"><path d="M.7 1V13"/><path d="M5.08 6.13L14.22 1.07Q15.80 0.20 15.80 2.00L15.80 12.00Q15.80 13.80 14.22 12.93L5.08 7.87Q3.50 7.00 5.08 6.13Z"/></g>
<g transform="translate(673.9499999999999 429.85)" stroke="#a4a4a4" color="#a4a4a4" stroke-width="1.2"><path d="M15.3 1V13"/><path d="M10.92 6.13L1.78 1.07Q0.20 0.20 0.20 2.00L0.20 12.00Q0.20 13.80 1.78 12.93L10.92 7.87Q12.50 7.00 10.92 6.13Z"/></g>
<g transform="translate(722.15 429.85)" stroke="#a4a4a4" color="#a4a4a4" stroke-width="1.2"><path d="M18.13 6.17L11.77 2.33Q10.40 1.50 10.40 3.10L10.40 10.90Q10.40 12.50 11.77 11.67L18.13 7.83Q19.50 7.00 18.13 6.17Z"/><path d="M9.23 6.17L2.87 2.33Q1.50 1.50 1.50 3.10L1.50 10.90Q1.50 12.50 2.87 11.67L9.23 7.83Q10.60 7.00 9.23 6.17Z"/></g>
<g transform="translate(776.9 426.65000000000003)" stroke="#333" color="#333" stroke-width="1.35"><path d="M1.1 10.3A9.7 9.7 0 0 1 19.9 6.1M19.9 1.3V6.1H15.1M19.9 9.3A9.7 9.7 0 0 1 2.1 14.3M2.1 19.1V14.3H6.9"/></g>
<g transform="translate(399.4 539.5)" stroke="#333" color="#333" stroke-width="1.15"><circle cx="0" cy="0" r="10.6"/><path d="M-4-1.8L0 2l4-3.8"/></g>
<g transform="translate(399.4 579.5)" stroke="#333" color="#333" stroke-width="1.15"><circle cx="0" cy="0" r="10.6"/><path d="M-4-1.8L0 2l4-3.8"/></g>
</svg>
</div><svg class="lay" width="1920" height="917" viewBox="0 0 1920 917" fill="none" stroke="#ff0000" stroke-width="2.4" stroke-linecap="round" stroke-linejoin="round"><rect x="1263.3" y="183.5" width="112" height="217.5" rx="11"/><rect x="1471.5" y="183.5" width="106" height="218.5" rx="11"/><rect x="707" y="721" width="26" height="35" rx="11"/><path stroke-width="2" d="M719.3 719.5L767.2 638M759.6 639.2L767.2 637.6L767.8 644.8"/></svg></body></html>
